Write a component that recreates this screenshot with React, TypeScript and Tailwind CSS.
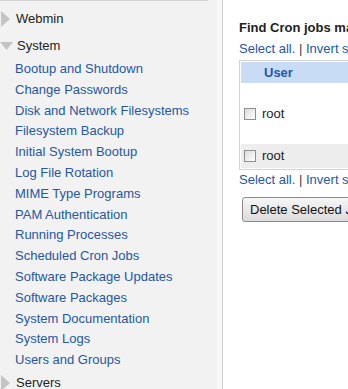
const links = [
  'Bootup and Shutdown',
  'Change Passwords',
  'Disk and Network Filesystems',
  'Filesystem Backup',
  'Initial System Bootup',
  'Log File Rotation',
  'MIME Type Programs',
  'PAM Authentication',
  'Running Processes',
  'Scheduled Cron Jobs',
  'Software Package Updates',
  'Software Packages',
  'System Documentation',
  'System Logs',
  'Users and Groups',
];

function RightArrow() {
  return (
    <svg width="11" height="16" viewBox="0 0 11 16" className="shrink-0">
      <path d="M1 0 L10 8 L1 16 Z" fill="#c4c4c4" />
    </svg>
  );
}

function DownArrow() {
  return (
    <svg width="13" height="9" viewBox="0 0 13 9" className="shrink-0">
      <path d="M0 0 L13 0 L6.5 8 Z" fill="#c4c4c4" />
    </svg>
  );
}

function Check() {
  return <span className="inline-block w-[12px] h-[12px] border border-[#8f8f8f] bg-gradient-to-br from-[#dcdcdc] to-white shrink-0" />;
}

function SelectLinks() {
  return (
    <div className="text-[13px] text-[#2457a8] leading-[16px]">
      Select all. <span className="text-[#444]">|</span> Invert selection.
    </div>
  );
}

export default function App() {
  return (
    <div
      className="w-[348px] h-[389px] overflow-hidden flex bg-white text-[13px]"
      style={{ fontFamily: 'Arial, "Liberation Sans", sans-serif' }}
    >
      <div className="w-[223px] shrink-0 flex bg-[#f2f2f2] border-r border-[#d0d0d0]">
        <div className="w-[217px] flex flex-col">
          <div className="h-[3px] w-[208px] border-b border-r border-[#d6d6d6] rounded-br-[4px]" />
          <div className="flex items-center gap-[5px] mt-[10px] h-[16px]">
            <RightArrow />
            <span className="text-[#222]">Webmin</span>
          </div>
          <div className="flex items-center gap-[4px] mt-[11px] h-[16px]">
            <DownArrow />
            <span className="text-[#222]">System</span>
          </div>
          <div className="flex flex-col pl-[15px] mt-[5px]">
            {links.map((l) => (
              <div key={l} className="h-[20.8px] leading-[20.8px] text-[#2457a8] whitespace-nowrap">
                {l}
              </div>
            ))}
          </div>
          <div className="flex items-center gap-[5px] mt-[4px] h-[16px]">
            <RightArrow />
            <span className="text-[#222]">Servers</span>
          </div>
        </div>
        <div className="flex-1 bg-[#f7f7f7]" />
      </div>

      <div className="flex-1 pl-[16px] pt-[20px] whitespace-nowrap overflow-hidden">
        <div className="font-bold text-[#222] leading-[16px]">Find Cron jobs matching :</div>
        <div className="mt-[5px]">
          <SelectLinks />
        </div>
        <div className="mt-[3px] w-[200px] border border-[#d4d4d4] p-[1px]">
          <div className="h-[21px] bg-[#c8dcf6] flex items-center pl-[23px] font-bold text-[#2457a8]">User</div>
          <div className="h-[61px] flex items-center gap-[6px] pl-[3px] text-[#222]">
            <Check />
            <span>root</span>
          </div>
          <div className="h-[24px] bg-[#ededed] flex items-center gap-[6px] pl-[3px] text-[#222]">
            <Check />
            <span>root</span>
          </div>
        </div>
        <div className="mt-[2px]">
          <SelectLinks />
        </div>
        <button className="mt-[9px] ml-[3px] h-[25px] px-[7px] border border-[#8a8a8a] rounded-[3px] bg-gradient-to-b from-[#f6f6f6] to-[#dcdcdc] text-[#111] text-[13px]">
          Delete Selected Jobs
        </button>
      </div>
    </div>
  );
}
